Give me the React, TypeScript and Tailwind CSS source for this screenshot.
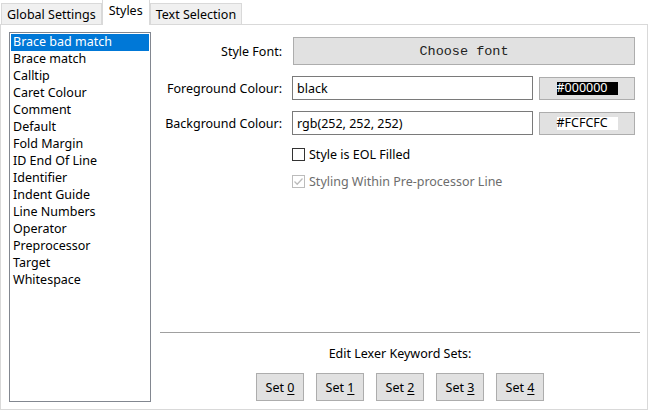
const styles = [
  "Brace bad match",
  "Brace match",
  "Calltip",
  "Caret Colour",
  "Comment",
  "Default",
  "Fold Margin",
  "ID End Of Line",
  "Identifier",
  "Indent Guide",
  "Line Numbers",
  "Operator",
  "Preprocessor",
  "Target",
  "Whitespace",
];

function Tab({ label, active }: { label: string; active?: boolean }) {
  if (active) {
    return (
      <div className="relative z-10 -mb-px flex h-[26px] items-start border border-b-0 border-[#d9d9d9] bg-white px-[6px] pt-[2px]">
        {label}
      </div>
    );
  }
  return (
    <div className="flex h-[21px] items-center border border-b-0 border-[#d9d9d9] bg-[#f0f0f0] px-[5px]">
      {label}
    </div>
  );
}

function ColourRow({
  label,
  value,
  hex,
  dark,
}: {
  label: string;
  value: string;
  hex: string;
  dark?: boolean;
}) {
  return (
    <div className="flex items-center">
      <div className="w-[122px] text-right">{label}</div>
      <div className="ml-[10px] flex h-[24px] w-[241px] items-center border border-[#7a7a7a] bg-white pl-[4px]">
        {value}
      </div>
      <div className="ml-[6px] flex h-[23px] w-[96px] items-center justify-center border border-[#adadad] bg-[#e1e1e1]">
        <span
          className={
            dark
              ? "flex h-[13px] w-[61px] items-center bg-black text-[12.5px] leading-none text-white"
              : "flex h-[13px] w-[61px] items-center bg-white text-[12.5px] leading-none text-black"
          }
        >
          {hex}
        </span>
      </div>
    </div>
  );
}

function SetButton({ n }: { n: number }) {
  return (
    <button className="flex h-[28px] w-[48px] items-center justify-center border border-[#adadad] bg-[#e1e1e1]">
      Set&nbsp;<span className="underline underline-offset-2">{n}</span>
    </button>
  );
}

export default function App() {
  return (
    <div className="h-[411px] w-[650px] overflow-hidden bg-white font-['Noto_Sans',sans-serif] text-[12.5px] leading-[17px] text-black">
      <div className="flex h-[24px] items-end pl-px">
        <Tab label="Global Settings" />
        <Tab label="Styles" active />
        <Tab label="Text Selection" />
      </div>
      <div className="flex h-[386px] w-[648px] border border-[#d9d9d9] pl-[8px] pt-[7px]">
        <div className="h-[370px] w-[142px] border border-[#828790] bg-white p-px">
          {styles.map((s, i) => (
            <div
              key={s}
              className={
                i === 0
                  ? "h-[17px] bg-[#0078d7] pl-[2px] leading-[16px] text-white"
                  : "h-[17px] pl-[2px] leading-[16px]"
              }
            >
              {s}
            </div>
          ))}
        </div>
        <div className="ml-[9px] flex w-[480px] flex-col">
          <div className="mt-[5px] flex items-center">
            <div className="w-[122px] text-right">Style Font:</div>
            <button className="ml-[11px] flex h-[28px] w-[342px] items-center justify-center border border-[#adadad] bg-[#e1e1e1] font-['Liberation_Mono',monospace] text-[13.5px] text-[#222]">
              Choose font
            </button>
          </div>
          <div className="mt-[11px]">
            <ColourRow label="Foreground Colour:" value="black" hex="#000000" dark />
          </div>
          <div className="mt-[11px]">
            <ColourRow label="Background Colour:" value="rgb(252, 252, 252)" hex="#FCFCFC" />
          </div>
          <label className="ml-[132px] mt-[11px] flex items-center">
            <span className="h-[13px] w-[13px] border border-[#333] bg-white" />
            <span className="ml-[4px]">Style is EOL Filled</span>
          </label>
          <label className="ml-[132px] mt-[10px] flex items-center text-[#6d6d6d]">
            <span className="flex h-[13px] w-[13px] items-center justify-center border border-[#bcbcbc] bg-white">
              <svg width="11" height="11" viewBox="0 0 11 11">
                <path d="M1.5 5.5 L4.2 8.2 L9.5 2.5" fill="none" stroke="#bcbcbc" strokeWidth="1.3" />
              </svg>
            </span>
            <span className="ml-[4px]">Styling Within Pre-processor Line</span>
          </label>
          <div className="mt-[142px] h-px w-[480px] bg-[#a0a0a0]" />
          <div className="mt-[12px] text-center">Edit Lexer Keyword Sets:</div>
          <div className="mt-[11px] flex justify-center gap-[12px]">
            {[0, 1, 2, 3, 4].map((n) => (
              <SetButton key={n} n={n} />
            ))}
          </div>
        </div>
      </div>
    </div>
  );
}
